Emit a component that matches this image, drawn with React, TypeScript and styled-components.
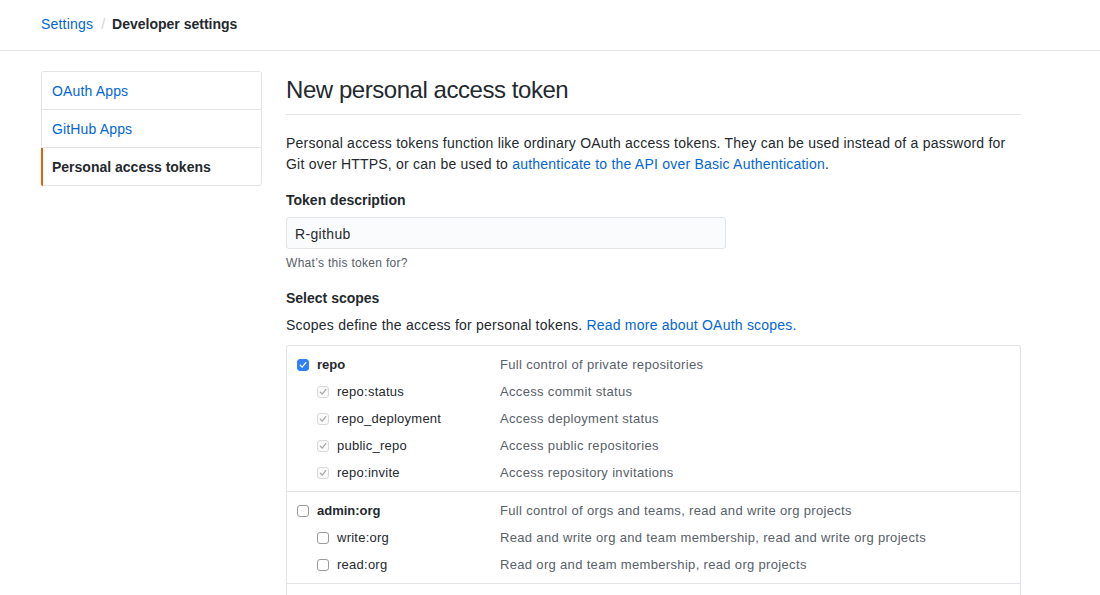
import React from "react";
import styled, { createGlobalStyle, css } from "styled-components";

const Global = createGlobalStyle`
  html, body { margin: 0; padding: 0; background: #fff; }
  body {
    font-family: "Liberation Sans", Arial, sans-serif;
    font-size: 14px;
    line-height: 1.5;
    color: #24292e;
  }
  * { box-sizing: border-box; }
`;

const Header = styled.header`
  height: 51px;
  padding: 0 41px 2px;
  display: flex;
  align-items: center;
  border-bottom: 1px solid #e1e4e8;
  font-size: 14px;
`;

const Crumb = styled.a`
  color: #0366d6;
  text-decoration: none;
  letter-spacing: 0.2px;
`;

const Sep = styled.span`
  color: #d1d5da;
  padding: 0 7px 0 8px;
`;

const Current = styled.strong`
  font-weight: 700;
  color: #24292e;
`;

const Body = styled.div`
  display: flex;
  align-items: flex-start;
  gap: 24px;
  padding: 20px 41px;
`;

const SideNav = styled.nav`
  width: 221px;
  flex: none;
  border: 1px solid #e1e4e8;
  border-radius: 3px;
  display: flex;
  flex-direction: column;
`;

const NavItem = styled.a<{ $selected?: boolean }>`
  position: relative;
  display: block;
  height: 38px;
  line-height: 37px;
  padding: 1px 10px 0;
  border-bottom: 1px solid #e1e4e8;
  color: #0366d6;
  text-decoration: none;
  letter-spacing: 0.15px;
  &:last-child { border-bottom: none; height: 37px; line-height: 36px; }
  ${(p) =>
    p.$selected &&
    css`
      color: #24292e;
      font-weight: 700;
      letter-spacing: 0;
      &::before {
        content: "";
        position: absolute;
        left: -1px;
        top: 0;
        bottom: -1px;
        width: 2px;
        background: #e36209;
        border-bottom-left-radius: 3px;
      }
    `}
`;

const Main = styled.main`
  width: 735px;
  flex: none;
`;

const Title = styled.h2`
  margin: 0;
  font-size: 24px;
  font-weight: 400;
  letter-spacing: -0.45px;
  line-height: 36px;
  padding: 1px 0 6px;
  border-bottom: 1px solid #e1e4e8;
`;

const Para = styled.p<{ $mt?: number }>`
  margin: ${(p) => p.$mt ?? 0}px 0 0;
  line-height: 21px;
  letter-spacing: 0.22px;
`;

const Link = styled.a`
  color: #0366d6;
  text-decoration: none;
`;

const Label = styled.div<{ $mt: number }>`
  margin-top: ${(p) => p.$mt}px;
  font-weight: 700;
  line-height: 21px;
`;

const Input = styled.input`
  display: block;
  margin-top: 6px;
  width: 440px;
  height: 32px;
  padding: 7px 8px 5px;
  font-family: inherit;
  font-size: 14px;
  letter-spacing: 0.35px;
  color: #24292e;
  background: #fafbfc;
  border: 1px solid #e1e4e8;
  border-radius: 3px;
  outline: none;
`;

const Note = styled.p`
  margin: 5px 0 0;
  font-size: 12px;
  line-height: 18px;
  letter-spacing: 0.3px;
  color: #586069;
`;

const ScopeTable = styled.div`
  margin-top: 9px;
  border: 1px solid #e1e4e8;
  border-bottom: none;
  border-radius: 3px 3px 0 0;
`;

const Group = styled.div`
  padding: 5px 10px;
  border-bottom: 1px solid #e1e4e8;
`;

const Row = styled.div`
  display: flex;
  align-items: center;
  height: 27px;
  font-size: 13px;
`;

const ScopeName = styled.label<{ $child?: boolean }>`
  display: flex;
  align-items: center;
  gap: 8px;
  width: 203px;
  flex: none;
  padding-left: ${(p) => (p.$child ? 20 : 0)}px;
  font-weight: ${(p) => (p.$child ? 400 : 700)};
  letter-spacing: ${(p) => (p.$child ? 0.25 : 0)}px;
  color: #24292e;
`;

const Desc = styled.span`
  color: #586069;
  letter-spacing: 0.33px;
`;

type BoxState = "checked" | "disabled" | "empty";

const Box = styled.span<{ $state: BoxState }>`
  width: 12px;
  height: 12px;
  flex: none;
  border-radius: 3px;
  display: inline-flex;
  align-items: center;
  justify-content: center;
  ${(p) =>
    p.$state === "checked"
      ? css`
          background: #2f7ff6;
          border: 1px solid #2f7ff6;
        `
      : p.$state === "disabled"
      ? css`
          background: #fbfbfb;
          border: 1px solid #d9d9d9;
        `
      : css`
          background: #fff;
          border: 1px solid #9a9a9a;
        `}
`;

const Check = ({ state }: { state: BoxState }) => (
  <Box $state={state}>
    {state !== "empty" && (
      <svg width="8" height="8" viewBox="0 0 8 8">
        <path
          d="M1.3 4.2 L3.2 6.1 L6.8 1.6"
          fill="none"
          stroke={state === "checked" ? "#fff" : "#a8a8a8"}
          strokeWidth="1.3"
          strokeLinecap="round"
          strokeLinejoin="round"
        />
      </svg>
    )}
  </Box>
);

type Scope = { name: string; desc: string; child?: boolean; state: BoxState };

const groups: Scope[][] = [
  [
    { name: "repo", desc: "Full control of private repositories", state: "checked" },
    { name: "repo:status", desc: "Access commit status", child: true, state: "disabled" },
    { name: "repo_deployment", desc: "Access deployment status", child: true, state: "disabled" },
    { name: "public_repo", desc: "Access public repositories", child: true, state: "disabled" },
    { name: "repo:invite", desc: "Access repository invitations", child: true, state: "disabled" },
  ],
  [
    { name: "admin:org", desc: "Full control of orgs and teams, read and write org projects", state: "empty" },
    { name: "write:org", desc: "Read and write org and team membership, read and write org projects", child: true, state: "empty" },
    { name: "read:org", desc: "Read org and team membership, read org projects", child: true, state: "empty" },
  ],
  [
    { name: "admin:public_key", desc: "Full control of user public keys", state: "empty" },
  ],
];

export default function App() {
  return (
    <>
      <Global />
      <Header>
        <Crumb href="#">Settings</Crumb>
        <Sep>/</Sep>
        <Current>Developer settings</Current>
      </Header>
      <Body>
        <SideNav>
          <NavItem href="#">OAuth Apps</NavItem>
          <NavItem href="#">GitHub Apps</NavItem>
          <NavItem href="#" $selected>
            Personal access tokens
          </NavItem>
        </SideNav>
        <Main>
          <Title>New personal access token</Title>
          <Para $mt={18}>
            Personal access tokens function like ordinary OAuth access tokens. They can be used instead of a password for
            Git over HTTPS, or can be used to{" "}
            <Link href="#">authenticate to the API over Basic Authentication</Link>.
          </Para>
          <Label $mt={15}>Token description</Label>
          <Input defaultValue="R-github" />
          <Note>What’s this token for?</Note>
          <Label $mt={16}>Select scopes</Label>
          <Para $mt={6}>
            Scopes define the access for personal tokens. <Link href="#">Read more about OAuth scopes.</Link>
          </Para>
          <ScopeTable>
            {groups.map((g, i) => (
              <Group key={i}>
                {g.map((s) => (
                  <Row key={s.name}>
                    <ScopeName $child={s.child}>
                      <Check state={s.state} />
                      {s.name}
                    </ScopeName>
                    <Desc>{s.desc}</Desc>
                  </Row>
                ))}
              </Group>
            ))}
          </ScopeTable>
        </Main>
      </Body>
    </>
  );
}
